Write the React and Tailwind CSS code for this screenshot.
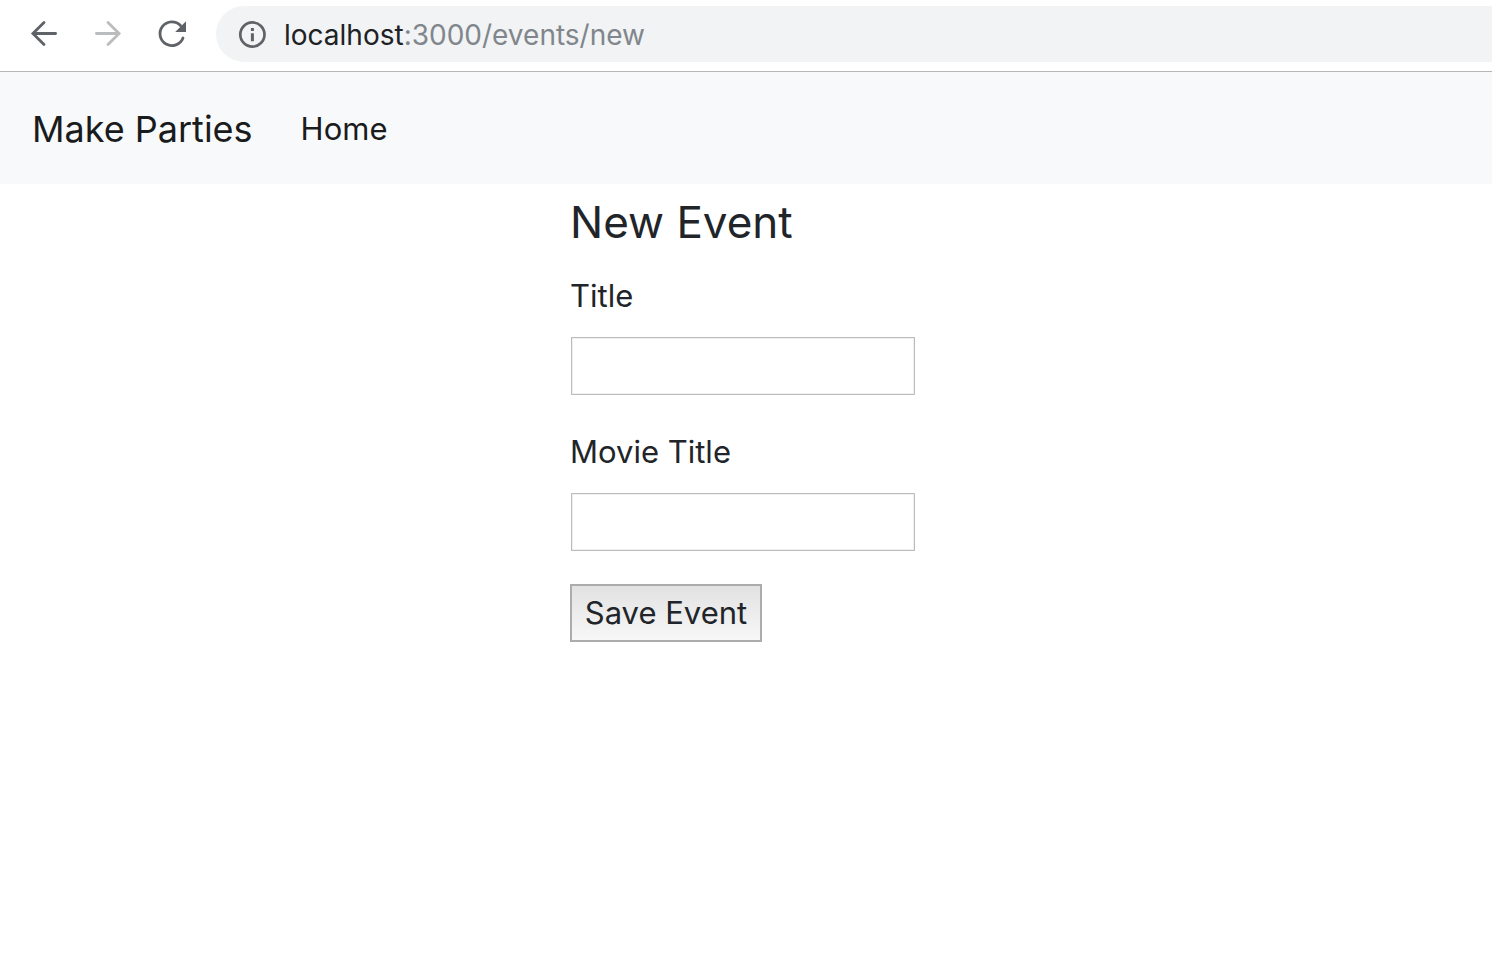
import React from "react";

function BrowserBar() {
  return (
    <header className="flex h-[72px] items-center border-b border-[#b6b6b6] bg-white pb-[3px]">
      <div className="flex shrink-0 items-center gap-8 px-7">
        <button type="button" aria-label="Back" className="size-8 text-[#5f6368]">
          <svg viewBox="0 0 32 32" className="size-8" fill="none" stroke="currentColor" strokeWidth="2.8" strokeLinecap="round">
            <path d="M27.6 15.5H5M16 4.4L4.900 15.500 16 26.600" />
          </svg>
        </button>
        <button type="button" aria-label="Forward" disabled className="size-8 text-[#babcbe]">
          <svg viewBox="0 0 32 32" className="size-8" fill="none" stroke="currentColor" strokeWidth="2.8" strokeLinecap="round">
            <path d="M4.400 15.500H27M16 4.400l11.100 11.100L16 26.600" />
          </svg>
        </button>
        <button type="button" aria-label="Reload" className="size-8 text-[#5f6368]">
          <svg viewBox="0 0 32 32" className="size-8">
            <path d="M24.500 7.500A11.900 11.900 0 1 0 27 20" fill="none" stroke="currentColor" strokeWidth="2.800" strokeLinecap="round" />
            <path d="M30 3.200V14H19.200z" fill="currentColor" />
          </svg>
        </button>
      </div>
      <div className="flex h-14 min-w-0 flex-1 items-center gap-[18px] rounded-l-full bg-[#f1f3f4] pl-[22px] pt-0.5">
        <svg viewBox="0 0 28 28" className="size-7 shrink-0 text-[#5f6368]" fill="none" stroke="currentColor" strokeWidth="2.700">
          <circle cx="14.400" cy="13.500" r="12.100" />
          <path d="M14.400 12.300v8M14.400 7v3" strokeWidth="3" />
        </svg>
        <div
          role="textbox"
          aria-label="Address"
          contentEditable
          suppressContentEditableWarning
          spellCheck={false}
          className="min-w-0 flex-1 text-[28px] leading-9 text-[#202124] outline-none"
        >
          localhost<span className="text-[#80868b]">:3000/events/new</span>
        </div>
      </div>
    </header>
  );
}

function Field({ id, label }) {
  return (
    <div className="flex flex-col items-start gap-4">
      <label htmlFor={id} className="text-[31px] leading-12">{label}</label>
      <input
        id={id}
        name={id}
        type="text"
        className="m-px h-[58px] w-[344px] border border-[#bcbcbc] bg-white px-2 text-[31px] shadow-[inset_0_0_0_1px_#f0f0f0] outline-none"
      />
    </div>
  );
}

export default function App() {
  return (
    <div className="min-h-screen bg-white font-['Inter',sans-serif] text-[#212529]">
      <BrowserBar />
      <nav className="flex h-28 items-center gap-12 bg-[#f8f9fa] px-8 pt-0.5 text-[#1a1b1c]">
        <a href="/" className="text-[36px] leading-[60px]">Make Parties</a>
        <a href="/" className="text-[31px] leading-12">Home</a>
      </nav>
      <main className="flex justify-center pt-2">
        <form className="w-[352px]" onSubmit={(e) => e.preventDefault()}>
          <h1 className="text-[44px] leading-[60px]">New Event</h1>
          <div className="mt-5 flex flex-col gap-8">
            <Field id="title" label="Title" />
            <Field id="movieTitle" label="Movie Title" />
            <button type="submit" className="h-[58px] w-48 border-2 border-[#acacac] bg-linear-to-b from-[#e2e2e2] to-[#f7f7f7] text-[31px]">
              Save Event
            </button>
          </div>
        </form>
      </main>
    </div>
  );
}
